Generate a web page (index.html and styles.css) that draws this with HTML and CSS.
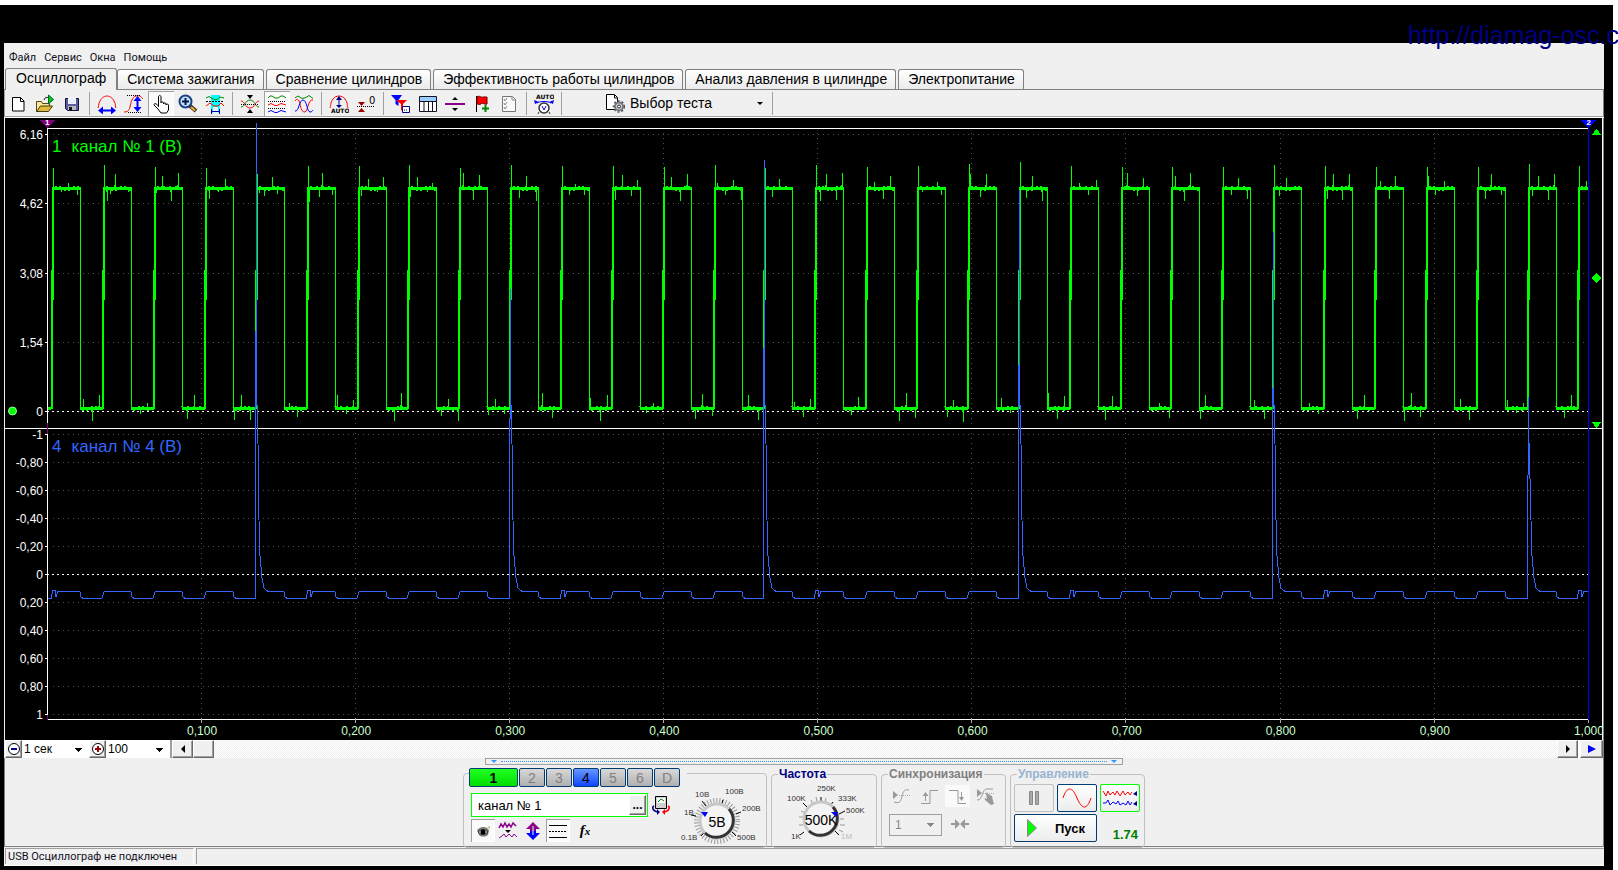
FILE: index.html
```html
<!DOCTYPE html>
<html lang="ru">
<head>
<meta charset="utf-8">
<title>Осциллограф</title>
<link rel="stylesheet" href="styles.css">
</head>
<body>
<div class="frame">
  <a class="site-link" href="#">http://diamag-osc.c</a>
  <main class="window">
    <nav class="menu">
      <button>Файл</button><button>Сервис</button><button>Окна</button><button>Помощь</button>
    </nav>
    <div class="tabs" role="tablist">
      <button class="tab tab-active" role="tab">Осциллограф</button>
      <button class="tab" role="tab">Система зажигания</button>
      <button class="tab" role="tab">Сравнение цилиндров</button>
      <button class="tab" role="tab">Эффективность работы цилиндров</button>
      <button class="tab" role="tab">Анализ давления в цилиндре</button>
      <button class="tab" role="tab">Электропитание</button>
    </div>
    <div class="toolbar">
      <button class="tool" aria-label="Новый"><svg viewBox="0 0 20 20"><path d="M4.500 3.500h8l3.500 3.500v10h-11.500z" fill="#fff" stroke="#000"/><path d="M12.500 3.500v4h3.500" fill="none" stroke="#000"/></svg></button>
      <button class="tool" aria-label="Открыть"><svg viewBox="0 0 20 20"><path d="M1.500 17.500v-10h5l1 2h7v3" fill="#f6e6a0" stroke="#554a10"/><path d="M1.500 17.500l4-5.500h12l-4 5.500z" fill="#e0b93c" stroke="#443a08"/><path d="M9 6c1-3 3-3 5-2" fill="none" stroke="#000"/><path d="M13.500 1l5 4.500-5 4.500z" fill="#0c0" stroke="#063"/></svg></button>
      <button class="tool" aria-label="Сохранить"><svg viewBox="0 0 20 20"><path d="M3.500 4.500h13v12h-11l-2-2z" fill="#5a5f9c" stroke="#113"/><path d="M6 4h8v6H6z" fill="#e8f0fb"/><path d="M6 12h8v4H6z" fill="#b9b9b9"/><path d="M7 13h3v3H7z" fill="#113"/></svg></button>
      <span class="sep"></span>
      <button class="tool" aria-label="Развертка"><svg viewBox="0 0 20 20"><path d="M1 14c1-1 0-4 2-7 2-4 5-5 7-5s5 1 7 5c2 3 1 6 2 7" fill="none" stroke="#f00"/><path d="M4 16.500h12" stroke="#00f" stroke-width="2"/><path d="M1 16.500l5-4v8zM19 16.500l-5-4v8z" fill="#00f"/></svg></button>
      <button class="tool" aria-label="Амплитуда"><svg viewBox="0 0 20 20"><path d="M0 18c3 0 5-1 6-5 1-5 2-10 6-11 4-1 5 1 7 3" fill="none" stroke="#f00"/><path d="M3 1.500h13M4 18.500h13" stroke="#000" stroke-dasharray="1 1"/><path d="M13.500 6v9" stroke="#00f" stroke-width="2"/><path d="M13.500 2l4 5h-8zM13.500 18l4-5h-8z" fill="#00f"/></svg></button>
      <button class="tool pressed" aria-label="Рука"><svg viewBox="0 0 20 20"><path d="M7.500 13V3c0-2 2.500-2 2.500 0v6c0-1.500 2.500-1.500 2.500 0v1c0-1.500 2.500-1.500 2.500 0v1c0-1.500 2.500-1 2.500 0v5l-2 3H10l-3-4-4-4c0-2 2-2 4.500 1z" fill="#fff" stroke="#000"/></svg></button>
      <button class="tool" aria-label="Лупа"><svg viewBox="0 0 20 20"><path d="M11 11l7 6" stroke="#432" stroke-width="4"/><path d="M13 13l4 3.500" stroke="#e8b030" stroke-width="2"/><circle cx="7.500" cy="7.500" r="6" fill="#bfe6ff" stroke="#1c3f86" stroke-width="2"/><path d="M7.500 4v7M4 7.500h7" stroke="#114" stroke-width="2"/></svg></button>
      <button class="tool" aria-label="Участок"><svg viewBox="0 0 20 20"><path d="M6 1h9v12H6zM6 13h2v6H6zM13 13h2v6h-2z" fill="#0ff"/><path d="M1 4l3-1.500 3 2 4 1.500 4-3 4 1" fill="none" stroke="#080"/><path d="M1 7.500h18" stroke="#000" stroke-dasharray="2 1"/><path d="M1 12l4-3 4 3 4 0 3-3 3 3" fill="none" stroke="#f00"/><path d="M7 17.500h7M6.500 15v5M14.500 15v5" stroke="#00a"/></svg></button>
      <span class="sep"></span>
      <button class="tool" aria-label="Совместить"><svg viewBox="0 0 20 20"><path d="M1 7c4 0 4 7 9 7s5-7 9-7" fill="none" stroke="#f00"/><path d="M1 13c4 0 4-7 9-7s5 7 9 7" fill="none" stroke="#080"/><path d="M1 10.500h18" stroke="#000" stroke-dasharray="1 1"/><path d="M7 1h6l-3 4zM7 19h6l-3-4z"/></svg></button>
      <button class="tool pressed" aria-label="Раздельно"><svg viewBox="0 0 20 20" fill="none"><path d="M1 4l2-2 2 0 3 2 3 0 3-2 2 0 3 2" stroke="#080"/><path d="M1 7.500h18M1 14.500h18" stroke="#000" stroke-dasharray="1 1"/><path d="M1 11l3-1.500 4 2h2l4-2 5 1.500" stroke="#f00"/><path d="M1 18l3-1.500 4 2h2l4-2 5 1.500" stroke="#00f"/></svg></button>
      <button class="tool" aria-label="Вместе"><svg viewBox="0 0 20 20" fill="none"><path d="M1 4l3-2 4 2.500 4-1 3-2 4 3" stroke="#080"/><path d="M1 7c2-3 4-2 5 3s2 8 5 8c3-1 3-13 8-12" stroke="#f00"/><path d="M1 17c4 1 4-11 8-11s4 12 7 12c2 0 2-1 3-2" stroke="#00f"/></svg></button>
      <span class="sep"></span>
      <button class="tool" aria-label="Авто масштаб"><svg viewBox="0 0 20 20"><path d="M1 14c1-2 0-5 3-9s9-4 12 0 2 7 3 9" fill="none" stroke="#f00"/><path d="M10 4v9" stroke="#008" stroke-width="1"/><path d="M10 2l3 4H7zM10 14l3-3H7z" fill="#008"/><text x="2" y="19" class="auto-text">AUTO</text></svg></button>
      <button class="tool" aria-label="Ноль"><svg viewBox="0 0 20 20"><path d="M2 8h7l-3.500 4zM2 18h7l-3.500-4z" fill="#900"/><path d="M1 12.500h18" stroke="#000" stroke-dasharray="1 1"/><text x="13" y="10" class="zero-text">0</text></svg></button>
      <span class="sep"></span>
      <button class="tool" aria-label="Фильтр"><svg viewBox="0 0 20 20"><path d="M0 1h11L7.500 6v6l-3-2V6z" fill="#00f"/><path d="M5 6h11l-4 4v7l-2-1v-6z" fill="#f00"/><path d="M11.500 12.500h7v6h-7z" fill="#fff" stroke="#008"/><path d="M13 16h4" stroke="#008" stroke-dasharray="1 1"/></svg></button>
      <button class="tool" aria-label="Таблица"><svg viewBox="0 0 20 20"><path d="M1.500 2.500h17v15h-17z" fill="#fff" stroke="#112"/><path d="M2 3h16v4H2z" fill="#9cf"/><path d="M1 7.500h18M6 7v10M10.500 7v10M14.500 7v10" stroke="#112"/></svg></button>
      <button class="tool" aria-label="Линия"><svg viewBox="0 0 20 20"><path d="M0 10h20" stroke="#808" stroke-width="2"/><path d="M7 6h6l-3-3zM7 14h6l-3 3z"/></svg></button>
      <button class="tool" aria-label="Метка"><svg viewBox="0 0 20 20"><path d="M4.500 2v16" stroke="#000"/><path d="M5 3c3-2 4 1 6 0h4v7c-3 1-4-2-6 0-2 1-3 0-4 0z" fill="#f00" stroke="#600"/><path d="M13.500 11v7M10 14.500h7" stroke="#080" stroke-width="2"/></svg></button>
      <button class="tool" aria-label="Отчет"><svg viewBox="0 0 20 20"><path d="M3.500 2.500h10l3 3v12h-13z" fill="#fafafa" stroke="#777"/><path d="M13 3v3h3M5 5l1 2 2-3M5 9l1 2 2-3M5 13l1 2 2-3" fill="none" stroke="#888"/></svg></button>
      <span class="sep"></span>
      <button class="tool" aria-label="Автообороты"><svg viewBox="0 0 20 20"><text x="2" y="5" class="auto-text">AUTO</text><path d="M3 9c3-2 11-2 14 0" fill="none" stroke="#00f"/><path d="M0 6l1 4 4-2zM20 6l-1 4-4-2z" fill="#00f"/><circle cx="10" cy="14" r="5" fill="#fff" stroke="#333" stroke-width="1.500"/><path d="M5 18l-1 2M15 18l1 2" stroke="#333"/><path d="M8 12l2 4 2-4" fill="none" stroke="#00f"/></svg></button>
      <span class="sep"></span>
      <button class="test-pick"><svg viewBox="0 0 20 20"><path d="M1.500 1.500h8l3 3v12h-11z" fill="#fff" stroke="#000"/><path d="M9.500 2v3h3" fill="none" stroke="#000"/><circle cx="14" cy="13.500" r="4" fill="#cdd5cd" stroke="#778" stroke-width="2"/><circle cx="14" cy="13.500" r="5.500" fill="none" stroke="#555" stroke-width="1.500" stroke-dasharray="2 2"/><circle cx="14" cy="13.500" r="1.500" fill="#fff" stroke="#222"/></svg><span>Выбор теста</span><i class="caret"></i></button>
      <span class="sep"></span>
    </div>

    <section class="chart">
      <svg class="plot" viewBox="5 118 1597 622" preserveAspectRatio="none">
        <g class="grid">
          <path d="M53 134.500H1586M53 203.500H1586M53 273.500H1586M53 342.500H1586M53 434.500H1586M53 462.500H1586M53 490.500H1586M53 518.500H1586M53 546.500H1586M53 602.500H1586M53 630.500H1586M53 658.500H1586M53 686.500H1586M53 714.500H1586"/>
          <path d="M201.500 133V716M355.500 133V716M509.500 133V716M663.500 133V716M817.500 133V716M971.500 133V716M1125.500 133V716M1280.500 133V716M1434.500 133V716"/>
        </g>
        <path class="zero" d="M47 411.500H1589M47 574.500H1589"/>
        <path class="axis" d="M48 128.500H1588M5 428.500H1602M48 719.500H1588M47.500 128V423M47.500 434V715M45 134.500h3M45 203.500h3M45 273.500h3M45 342.500h3M45 411.500h3M45 434.500h3M45 462.500h3M45 490.500h3M45 518.500h3M45 546.500h3M45 574.500h3M45 602.500h3M45 630.500h3M45 658.500h3M45 686.500h3M45 714.500h3"/>
        <path class="tick" d="M201.500 718v5M355.500 718v5M509.500 718v5M663.500 718v5M817.500 718v5M971.500 718v5M1125.500 718v5M1280.500 718v5M1434.500 718v5M1588.500 718v5"/>
        <path class="cursor-one" d="M47.500 120v8M47.500 423v11M47.500 715v5"/>
        <path class="trace-one" id="trace-edge"/>
        <path class="trace-one level" id="trace-level"/>
        <path class="trace-four" id="trace-four"/>
        <path class="cursor-two" d="M1588.500 124V720"/>
        <path fill="#800080" d="M40 120h15l-7 8h-1z"/>
        <path fill="#0000ff" d="M1581 120h15l-7 8h-1z"/>
        <g fill="#00ff00">
          <circle cx="12.500" cy="411" r="4" stroke="#9f9"/>
          <path d="M1592 135h9l-4-6h-1zM1592 422h9l-4 6h-1zM1596.500 273l5 5-5 5-5-5z"/>
        </g>
      </svg>
      <div class="scale scale-one"><span>6,16</span><span>4,62</span><span>3,08</span><span>1,54</span><span>0</span></div>
      <div class="scale scale-four"><span>-1</span><span>-0,80</span><span>-0,60</span><span>-0,40</span><span>-0,20</span><span>0</span><span>0,20</span><span>0,40</span><span>0,60</span><span>0,80</span><span>1</span></div>
      <div class="caption caption-one"><span>1</span><span>канал № 1 (В)</span></div>
      <div class="caption caption-four"><span>4</span><span>канал № 4 (В)</span></div>
      <b class="flag flag-one">1</b><b class="flag flag-two">2</b>
      <div class="times"><span>0,100</span><span>0,200</span><span>0,300</span><span>0,400</span><span>0,500</span><span>0,600</span><span>0,700</span><span>0,800</span><span>0,900</span><span>1,000</span></div>
    </section>

    <div class="scroller">
      <button class="raised zoom" aria-label="Уменьшить"><svg viewBox="0 0 14 14"><circle cx="7" cy="7" r="5.500" fill="#fff" stroke="#000"/><path d="M4 7h6" stroke="#008" stroke-width="2"/></svg></button>
      <select class="time-pick" aria-label="Время"><option>1 сек</option></select>
      <button class="raised zoom" aria-label="Увеличить"><svg viewBox="0 0 14 14"><circle cx="7" cy="7" r="5.500" fill="#fff" stroke="#000"/><path d="M4 7h6M7 4v6" stroke="#900" stroke-width="2"/></svg></button>
      <select class="size-pick" aria-label="Масштаб"><option>100</option></select>
      <button class="raised arrow" aria-label="Назад"><svg viewBox="0 0 10 10"><path d="M7 1v8L3 5z"/></svg></button>
      <span class="raised thumb"></span>
      <span class="track"></span>
      <button class="raised arrow" aria-label="Вперед"><svg viewBox="0 0 10 10"><path d="M3 1v8l4-4z"/></svg></button>
      <button class="raised arrow play" aria-label="Воспроизвести"><svg viewBox="0 0 10 10"><path d="M1 1v8l8-4z" fill="#00f"/></svg></button>
    </div>

    <section class="dock">
      <div class="splitter"><i></i><span></span><i></i></div>
      <div class="groups">
        <div class="group channel-group">
          <div class="channels">
            <button class="ch ch-one">1</button><button class="ch">2</button><button class="ch">3</button><button class="ch ch-four">4</button><button class="ch">5</button><button class="ch">6</button><button class="ch">D</button>
          </div>
          <div class="channel-body">
            <div class="channel-setup">
              <div class="name-row">
                <div class="name-box"><input type="text" value="канал № 1" aria-label="Имя канала"><button class="raised dots">...</button></div>
                <svg class="swap" viewBox="0 0 20 20"><path d="M4.500 1.500h11v12h-11z" fill="#cfcfcf" stroke="#000"/><path d="M6 3h8v5H6z" fill="#fff"/><path d="M7 7l3-3 3 2" fill="none" stroke="#080"/><path d="M7 17c-6-1-6-5-4-6" fill="none" stroke="#008" stroke-width="1.500"/><path d="M13 17c6-1 6-5 4-6" fill="none" stroke="#f00" stroke-width="1.500"/><path d="M6 14l3 3-3 3z" fill="#008"/><path d="M14 14l-3 3 3 3z" fill="#f00"/></svg>
              </div>
              <div class="mode-row">
                <button class="mode pressed" aria-label="Видимость"><svg viewBox="0 0 20 20"><path d="M4 9c4-4 9-4 12 0l-1 5c-3 2-7 2-9 0z" fill="#777"/><path d="M5 11c3-3 7-3 10 0-3 3-7 3-10 0z" fill="#ddd" stroke="#222"/><circle cx="10" cy="11" r="2.500"/><path d="M14 6l3-1v3z" fill="#cb6"/></svg></button>
                <button class="mode" aria-label="Фильтр"><svg viewBox="0 0 20 20"><path d="M1 7l2-4 2 3 2-4 2 4 2-3 2 3 2-4 3 3" fill="none" stroke="#808" stroke-width="1.500"/><path d="M7 9h6l-3 3z"/><path d="M1 17l3-2 2-2 2 3 3-3 3 3 2-3 3 3" fill="none" stroke="#808"/></svg></button>
                <button class="mode" aria-label="Сдвиг"><svg viewBox="0 0 20 20"><path d="M10 1l7 7h-4v2H7V8H3z" fill="#808"/><path d="M10 19l7-7h-4v-2H7v2H3z" fill="#00f"/><path d="M10 5v9" stroke="#fff"/></svg></button>
                <button class="mode pressed" aria-label="Линии"><svg viewBox="0 0 20 20"><path d="M1 4.500h18M1 16.500h18" stroke="#000"/><path d="M1 10.500h18" stroke="#000" stroke-dasharray="2 1"/></svg></button>
                <button class="mode formula"><i>f<small>x</small></i></button>
              </div>
            </div>
            <svg class="dial" viewBox="0 0 84 60">
              <circle cx="38" cy="34" r="20" class="teeth"/>
              <path d="M22 49l4-4M12 28l5 1M23 14l4 5M44 13l-2 6M62 25l-5 2M57 49l-4-4" stroke="#000"/>
              <circle cx="38" cy="34" r="17" class="knob-light"/><path d="M50 22a17 17 0 0 1-24 24" class="knob-dark"/>
              <path d="M22 25h7l-3 5z" fill="#00f"/>
              <text x="38" y="40" class="dial-value">5В</text>
              <text x="2" y="53">0.1В</text><text x="5" y="28">1В</text><text x="16" y="10">10В</text><text x="46" y="7">100В</text><text x="63" y="24">200В</text><text x="58" y="53">500В</text>
            </svg>
          </div>
        </div>
        <fieldset class="group">
          <legend class="navy">Частота</legend>
          <svg class="dial" viewBox="0 0 84 60">
            <path d="M21 50l4-3M24 18l4 4M42 12v6M54 17l-3 4M66 26l-6 3M60 50l-4-4" stroke="#000"/>
            <path d="M20 32h4M20 40h4M22 26l4 2M32 15l2 4M37 12l1 4M47 13l-1 4M61 34h4M61 40h5M60 45l4 2" stroke="#999"/>
            <circle cx="42" cy="34" r="17" class="knob-light"/><path d="M54 22a17 17 0 0 1-24 24" class="knob-dark"/>
            <text x="42" y="40" class="dial-value">500K</text>
            <path d="M52 27h7l-2 5z" fill="#00f"/>
            <text x="12" y="54">1K</text><text x="8" y="16">100K</text><text x="38" y="6">250K</text><text x="59" y="16">333K</text><text x="67" y="28">500K</text><text x="62" y="54" fill="#bbb">1M</text>
          </svg>
        </fieldset>
        <fieldset class="group sync">
          <legend class="grey">Синхронизация</legend>
          <div class="sync-row">
            <button aria-label="Уровень"><svg viewBox="0 0 20 20"><path d="M2 5l5 4-5 4z" fill="#999"/><path d="M3 16c6 2 7-1 8-6s3-7 7-6" fill="none" stroke="#999"/><path d="M8 9.500h11" stroke="#aaa" stroke-dasharray="1 1"/></svg></button>
            <button aria-label="Фронт"><svg viewBox="0 0 20 20"><path d="M2 17.500h9v-13h8" fill="none" stroke="#999" stroke-width="1"/><path d="M6.500 15V9" stroke="#999"/><path d="M3.500 10h6l-3-4z" fill="#999"/></svg></button>
            <button class="pressed" aria-label="Спад"><svg viewBox="0 0 20 20"><path d="M2 4.500h9v13h8" fill="none" stroke="#999"/><path d="M14.500 6v6" stroke="#999"/><path d="M12 11h5l-2.500 4z" fill="#999"/></svg></button>
            <button aria-label="Рука"><svg viewBox="0 0 20 20"><path d="M2 3l5 4-5 4zM11 8c0-2 2-2 2 0l4 2 1 5 1 3-3 1-6-5c-1-2 0-2 2-1z" fill="#999"/><path d="M2 14c6 1 5-12 10-11h6" fill="none" stroke="#999"/><path d="M8 7.500h11" stroke="#aaa" stroke-dasharray="1 1"/></svg></button>
          </div>
          <div class="sync-row">
            <select disabled aria-label="Канал"><option>1</option></select>
            <svg viewBox="0 0 20 20"><path d="M1 9h4V5l5 5-5 5v-4H1zM19 9h-4V5l-5 5 5 5v-4h4z" fill="#999"/></svg>
          </div>
        </fieldset>
        <fieldset class="group control">
          <legend class="pale">Управление</legend>
          <div class="control-grid">
            <button class="push off" aria-label="Пауза"><svg viewBox="0 0 30 20"><path d="M10.500 3.500h3v13h-3zM16.500 3.500h3v13h-3z" fill="#aaa" stroke="#888"/></svg></button>
            <button class="push" aria-label="Один сигнал"><svg viewBox="0 0 30 20"><path d="M1 10c4-12 9-12 14 0s10 12 14 0" fill="none" stroke="#f00"/></svg></button>
            <button class="push live" aria-label="Поток"><svg viewBox="0 0 36 20"><path d="M1 3l3 5 2-5 2 4 3-3 2 3 2-4 3 5 3-5 2 4 3-3 2 3 2-3" fill="none" stroke="#f00"/><path d="M1 15l3 0 2-3 2 5 3-3 3 2 2-3 2 4 3-2 3 2 2-4 2 4 2-3" fill="none" stroke="#00f"/><path d="M35 3v5l-4-2zM35 13v5l-4-2z" fill="#008"/></svg></button>
            <button class="push start"><svg viewBox="0 0 12 20"><path d="M1.500 1.500v17l9-8.500z" fill="#0f0" stroke="#888"/></svg>Пуск</button>
            <output>1.74</output>
          </div>
        </fieldset>
      </div>
    </section>
    <footer class="status"><span>USB Осциллограф не подключен</span><span></span></footer>
  </main>
</div>
<script src="traces.js"></script>
</body>
</html>
```
FILE: styles.css
```css
* { box-sizing: border-box; }
body { margin: 0; background: #fff; overflow: hidden; font: 12px "Liberation Sans", Arial, sans-serif; color: #000; display: flex; flex-direction: column; min-height: 100vh; padding: 5px 5px 0 0; }
button, input, select { font: inherit; color: inherit; margin: 0; padding: 0; border: 0; background: none; border-radius: 0; }
button svg { display: block; }
.frame { position: relative; flex: 1; display: flex; flex-direction: column; background: #000; padding: 38px 9px 4px 4px; }
.site-link { position: absolute; right: -6px; top: 15px; z-index: 2; font-size: 25px; line-height: 30px; color: #000080; text-decoration: none; white-space: nowrap; }
.window { flex: 1; display: flex; flex-direction: column; background: #f0f0f0; min-width: 0; }

.menu { display: flex; gap: 8px; padding: 8px 5px 0; height: 25px; }
.menu button, .status { font: 11px Roboto, sans-serif; color: #112; }
.menu button { line-height: 14px; height: 14px; }

.tabs { display: flex; align-items: flex-end; gap: 2px; height: 22px; border-bottom: 1px solid #808080; padding-left: 1px; }
.tab { height: 20px; padding: 0 8px 1px 9px; font-size: 14px; line-height: 17px; border: 1px solid #808080; border-bottom: 0; border-radius: 3px 3px 0 0; background: linear-gradient(#fff, #ebebeb); }
.tab-active { height: 22px; padding: 0 10px 2px; margin: 0 -2px -1px 0; background: #f0f0f0; z-index: 1; }

.toolbar { display: flex; align-items: center; height: 27px; border: solid #a0a0a0; border-width: 0 1px 1px; border-right-color: #808080; }
.tool { width: 26px; height: 25px; padding: 3px; flex: none; margin-right: 1px; }
.tool svg { width: 20px; height: 20px; }
.pressed { background: #fafafa; box-shadow: inset 1px 1px #a0a0a0, inset -1px -1px #fff; }
.sep { width: 1px; height: 23px; background: #a0a0a0; margin: 0 4px 0 3px; }
.auto-text { font: bold 6px "DejaVu Sans", sans-serif; }
.zero-text { font: 10px "DejaVu Sans", sans-serif; }
.test-pick { display: flex; align-items: center; gap: 5px; width: 164px; margin-left: 39px; font-size: 14px; }
.test-pick svg { width: 20px; height: 20px; }
.caret { border: 3px solid transparent; border-top-color: #000; border-bottom: 0; margin: 0 6px 0 auto; }

.chart { position: relative; flex: 1; min-height: 500px; margin: 1px 0 0 1px; overflow: hidden; background: #000; color: #fff; border-right: 1px solid #808080; box-shadow: 0 -1px #fff; }
.plot { position: absolute; left: 0; top: 0; width: 100%; height: 100%; border-right: 1px solid #fff; }
.plot path { vector-effect: non-scaling-stroke; shape-rendering: crispEdges; }
.grid path { stroke: #505050; stroke-dasharray: 1 4; fill: none; }
.zero { stroke: #fff; stroke-dasharray: 2 3; }
.axis { stroke: #fff; fill: none; }
.tick { stroke: #aaa; }
.cursor-one { stroke: #800080; }
.cursor-two { stroke: #0000ff; }
.trace-one { stroke: #00ff00; fill: none; }
.level { stroke-width: 3; }
.trace-four { stroke: #3366ff; fill: none; }
.scale { position: absolute; left: 0; width: 38px; display: flex; flex-direction: column; justify-content: space-between; text-align: right; font-size: 12px; line-height: 12px; }
.scale-one { top: 11px; height: 289px; }
.scale-four { top: 311px; height: 292px; }
.caption { position: absolute; left: 47px; display: flex; gap: 10px; font-size: 17px; line-height: 20px; color: #00ff00; }
.caption-one { top: 19px; }
.caption-four { top: 319px; color: #3366ff; }
.flag { position: absolute; top: 1px; font-size: 8px; line-height: 8px; }
.flag-one { left: 40px; }
.flag-two { right: 12px; }
.times { position: absolute; left: 43px; right: 14px; bottom: 2px; display: grid; grid-template-columns: repeat(10, 10%); margin: 0; text-align: center; line-height: 14px; color: #ccffcc; transform: translateX(5%); }

.scroller { display: flex; height: 18px; margin-left: 1px; border-right: 1px solid #808080; background: #fff; }
.raised { background: #f0f0f0; border: 1px solid; border-color: #fff #696969 #696969 #fff; box-shadow: inset -1px -1px #a0a0a0; }
.zoom { width: 17px; padding: 1px; }
.zoom svg { width: 14px; height: 14px; }
.scroller select { width: 67px; padding: 0 2px; appearance: none; background-color: #fff; }
.scroller select, .sync select { background-image: linear-gradient(to right, currentColor, currentColor), linear-gradient(to right, currentColor, currentColor), linear-gradient(to right, currentColor, currentColor), linear-gradient(to right, currentColor, currentColor); background-size: 7px 1px, 5px 1px, 3px 1px, 1px 1px; background-position: right 7px top 8px, right 8px top 9px, right 9px top 10px, right 10px top 11px; background-repeat: no-repeat; }
.scroller .size-pick { width: 66px; border-right: 2px solid #a0a0a0; }
.arrow { width: 21px; display: grid; place-items: center; }
.arrow svg { width: 10px; height: 10px; }
.thumb { width: 21px; }
.track { flex: 1; background: repeating-conic-gradient(#fff 0 25%, #f0f0f0 0 50%) 0 0 / 2px 2px; }
.play { width: 23px; margin-left: 2px; }

.dock { padding-bottom: 2px; border: solid #808080; border-width: 0 1px 1px; }
.splitter { display: flex; align-items: center; width: 638px; height: 7px; margin: 0 auto; padding: 0 5px; border: 1px solid #a0a0a0; gap: 4px; }
.splitter i { border: 3px solid transparent; border-top-color: #39f; border-bottom: 0; }
.splitter span { flex: 1; border-top: 1px dotted #39f; }
.groups { display: grid; grid-template-columns: 304px 106px 125px 135px; gap: 4px; justify-content: center; height: 77px; margin-top: 2px; }
.group { min-width: 0; margin: 0; padding: 0; border: 1px solid #c0c0c0; border-radius: 4px; }
legend { margin-left: 6px; padding: 0 1px; font-weight: bold; font-size: 12px; line-height: 14px; height: 14px; }
.navy { color: #000080; }
.grey { color: #808080; }
.pale { color: #99b4d1; }
.channel-group { margin-top: 6px; }
.channels { display: flex; gap: 1px; width: 218px; margin: -6px 0 0 5px; background: #f0f0f0; padding-right: 4px; }
.ch { width: 26px; height: 19px; flex: none; border: 1px solid #003c74; border-radius: 2px; background: linear-gradient(#d8d8d8, #b0b0b0); color: #808080; font-size: 14px; line-height: 16px; }
.ch-one { width: 49px; background: linear-gradient(#2f2, #0d0); color: #000; font-weight: bold; }
.ch-four { background: linear-gradient(#69f, #14f); color: #000; }
.channel-body { display: flex; }
.channel-setup { padding: 6px 0 0 7px; width: 213px; }
.name-row { display: flex; align-items: center; gap: 3px; }
.name-box { display: flex; width: 177px; height: 24px; padding: 1px; border: 1px solid #00ff00; background: #fff; }
.name-box input { flex: 1; min-width: 0; padding-left: 5px; font-size: 13px; }
.dots { width: 17px; font-weight: bold; line-height: 12px; }
.swap { width: 20px; height: 20px; }
.mode-row { display: flex; gap: 1px; margin-top: 2px; }
.mode { width: 24px; height: 23px; padding: 2px; }
.mode svg { width: 20px; height: 20px; }
.formula { font: bold 15px "Liberation Serif", serif; margin-left: 2px; }
.formula small { font-size: 11px; }
.dial { display: block; width: 84px; height: 60px; fill: none; overflow: visible; }
.dial text { font-size: 8px; fill: #333; }
.dial text[fill] { fill: #bbb; }
.dial .dial-value { font-size: 14px; text-anchor: middle; fill: #000; }
.group > .dial { margin: 4px auto 0 7px; }
.channel-body .dial { margin-left: 2px; }
.teeth { stroke: #999; stroke-width: 6; stroke-dasharray: 1 2; }
.knob-light { fill: #f4f4f4; stroke: #c8c8c8; stroke-width: 3; }
.knob-dark { stroke: #333; stroke-width: 3; }
.sync-row { display: flex; align-items: center; gap: 3px; padding: 4px 7px 0; }
.sync-row button { width: 25px; height: 22px; padding: 1px 2px; }
.sync-row svg { width: 20px; height: 20px; }
.sync .pressed { box-shadow: none; }
.sync select { width: 53px; height: 22px; margin: 3px 5px 0 0; padding-left: 5px; appearance: none; border: 1px solid #a0a0a0; color: #888; opacity: 1; }
.control-grid { display: grid; grid-template-columns: 40px 40px 40px; gap: 2px 3px; padding: 3px 3px 0; }
.push { height: 28px; border: 1px solid #003c74; border-radius: 2px; background: linear-gradient(#fff, #ececec); display: flex; align-items: center; justify-content: center; }
.push svg { width: 30px; height: 20px; }
.off { border-color: #c0c0c0; background: #f0f0f0; }
.live { border-color: #00ff00; }
.live svg { width: 36px; }
.start { grid-column: span 2; gap: 17px; font-weight: bold; font-size: 13px; }
.start svg { width: 12px; }
output { align-self: end; color: #008000; font-weight: bold; font-size: 13px; text-align: right; padding-right: 2px; }

.status { display: flex; height: 19px; gap: 2px; padding: 1px 0 1px 1px; border-bottom: 1px solid #fff; }
.status span { border: solid #a0a0a0; border-width: 1px 0 0 1px; flex: 1; padding-left: 2px; line-height: 15px; white-space: nowrap; }
.status span:first-child { flex: none; width: 189px; border-right: 1px solid #fff; }
```
FILE: traces.js
```js
// Each pulse: [overshoot y, spikes on the high level, spikes on the low level]; a spike is [offset, y].
const pulses = [
  [168, [[9, 192], [16, 183], [25, 195]], [[31, 399], [40, 421], [47, 395]]],
  [165, [[4, 201], [7, 194], [12, 174], [25, 192]], [[37, 414], [44, 403]]],
  [167, [[2, 193], [8, 176], [17, 201], [24, 173]], [[33, 419], [40, 395]]],
  [168, [[4, 199], [13, 192], [20, 179]], [[29, 420], [36, 395], [45, 420]]],
  [174, [[3, 193], [8, 196], [16, 177], [21, 194]], [[33, 403], [41, 417]]],
  [166, [[2, 202], [12, 197], [15, 173], [25, 195]], [[30, 395], [39, 414], [46, 400]]],
  [166, [[3, 196], [10, 179], [19, 192], [25, 177]], [[36, 421], [43, 393]]],
  [165, [[2, 197], [9, 177], [19, 192], [24, 183]], [[33, 416], [40, 399], [50, 421]]],
  [168, [[4, 173], [14, 200], [20, 175]], [[29, 415], [36, 399], [45, 414]]],
  [165, [[1, 180], [9, 198], [16, 176], [26, 201]], [[32, 393], [42, 418]]],
  [166, [[8, 195], [14, 184], [23, 195]], [[29, 398], [39, 421], [46, 395]]],
  [166, [[3, 200], [10, 175], [19, 196], [25, 180]], [[34, 413], [41, 403]]],
  [167, [[1, 195], [8, 177], [17, 201], [24, 174]], [[32, 419], [39, 394], [49, 416]]],
  [165, [[3, 183], [11, 195], [19, 180], [27, 200]], [[34, 395], [44, 420]]],
  [168, [[1, 205], [8, 197], [15, 179]], [[30, 402], [39, 417], [46, 399]]],
  [165, [[5, 201], [11, 174], [21, 200], [27, 173]], [[36, 415], [43, 397]]],
  [167, [[1, 196], [8, 182], [17, 199], [24, 176]], [[33, 421], [40, 393], [49, 418]]],
  [166, [[1, 203], [5, 192], [20, 182], [24, 195]], [[30, 417], [36, 400], [46, 422]]],
  [164, [[2, 174], [12, 197], [18, 174], [28, 195]], [[33, 398], [42, 413]]],
  [162, [[7, 198], [13, 176], [23, 201]], [[29, 393], [38, 419], [45, 396]]],
  [166, [[9, 183], [18, 195], [26, 180]], [[35, 420], [42, 396]]],
  [167, [[1, 200], [6, 173], [16, 196], [22, 178]], [[38, 403], [48, 418]]],
  [167, [[4, 176], [13, 201], [19, 173]], [[29, 419], [34, 395]]],
  [167, [[9, 195], [16, 178], [25, 199]], [[32, 400], [42, 419]]],
  [165, [[1, 209], [6, 196], [13, 178]], [[36, 403], [45, 414]]],
  [166, [[3, 199], [9, 174], [18, 200], [25, 174]], [[33, 419], [40, 395]]],
  [167, [[5, 181], [14, 199], [20, 176]], [[29, 421], [36, 393], [45, 417]]],
  [167, [[1, 204], [2, 176], [9, 195], [18, 181]], [[34, 399], [43, 420]]],
  [167, [[8, 199], [14, 174], [24, 195]], [[30, 400], [39, 413], [46, 403]]],
  [164, [[1, 204], [4, 196], [10, 176], [20, 200], [26, 174]], [[36, 418], [43, 395]]],
  [166, [[8, 181]], []]
];
const start = 52.3;
const step = 50.87;
const end = 1588;
// Ignition peaks of channel 4, keyed by pulse number.
const peaks = { 4: 123, 9: 289, 14: 160, 19: 190, 24: 232, 29: 397 };

let edges = "";
let levels = "M48 408.500H51";
let four = "M48 598.500H51";
pulses.forEach(([top, high, low], i) => {
  const x = Math.round(start + i * step);
  const fall = Math.min(x + 28, end);
  const next = Math.min(Math.round(start + (i + 1) * step), end);
  edges += `M${x - 0.5} 409V270M${x + 0.5} 409V188M${x + 1.5} 300V${top}`;
  levels += `M${x} 188.500H${fall}`;
  if (fall < end) {
    edges += `M${fall + 0.5} 187V409`;
    levels += `M${fall} 408.500H${next}`;
  }
  for (const [dx, y] of high) {
    const mid = Math.round((y + 188) / 2) + (y < 188 ? 4 : -3);
    edges += `M${x + dx + 0.5} 188V${y}M${x + dx - 0.5} 188V${mid}`;
  }
  for (const [dx, y] of low) {
    const mid = Math.round((y + 408) / 2) + (y < 408 ? 4 : -3);
    edges += `M${x + dx + 0.5} 408V${y}M${x + dx - 0.5} 408V${mid}`;
  }
  for (let dx = 3; dx < 48; dx += 4 + (i + dx) % 3) {
    const y = dx < 27 ? (dx % 2 ? 186 : 190) : (dx % 2 ? 406 : 410);
    if (x + dx < end) edges += `M${x + dx} ${y + 0.5}h2`;
  }
  if (peaks[i]) {
    const t = peaks[i];
    four += `H${x - 0.5}V560L${x + 0.5} ${t}V${Math.max(t + 30, 405)}L${x + 1.5} ${Math.max(t + 60, 405)}L${x + 3} 520L${x + 4} 556L${x + 6} 578L${x + 8} 588L${x + 12} 591.500`;
  } else if (i % 5 === 0 && x + 8 < end) {
    four += `L${x + 1} 590L${x + 3} 590L${x + 4} 597L${x + 6} 591.500`;
  } else {
    four += `L${x + 1} 592L${x + 3} 591.500`;
  }
  const flat = Math.min(x + 28, end);
  four += `H${flat}`;
  if (flat < end) four += `L${flat + 1} 597L${flat + 3} 598.500H${Math.min(next - 1, end)}`;
});
document.getElementById("trace-edge").setAttribute("d", edges);
document.getElementById("trace-level").setAttribute("d", levels);
document.getElementById("trace-four").setAttribute("d", four);
```
